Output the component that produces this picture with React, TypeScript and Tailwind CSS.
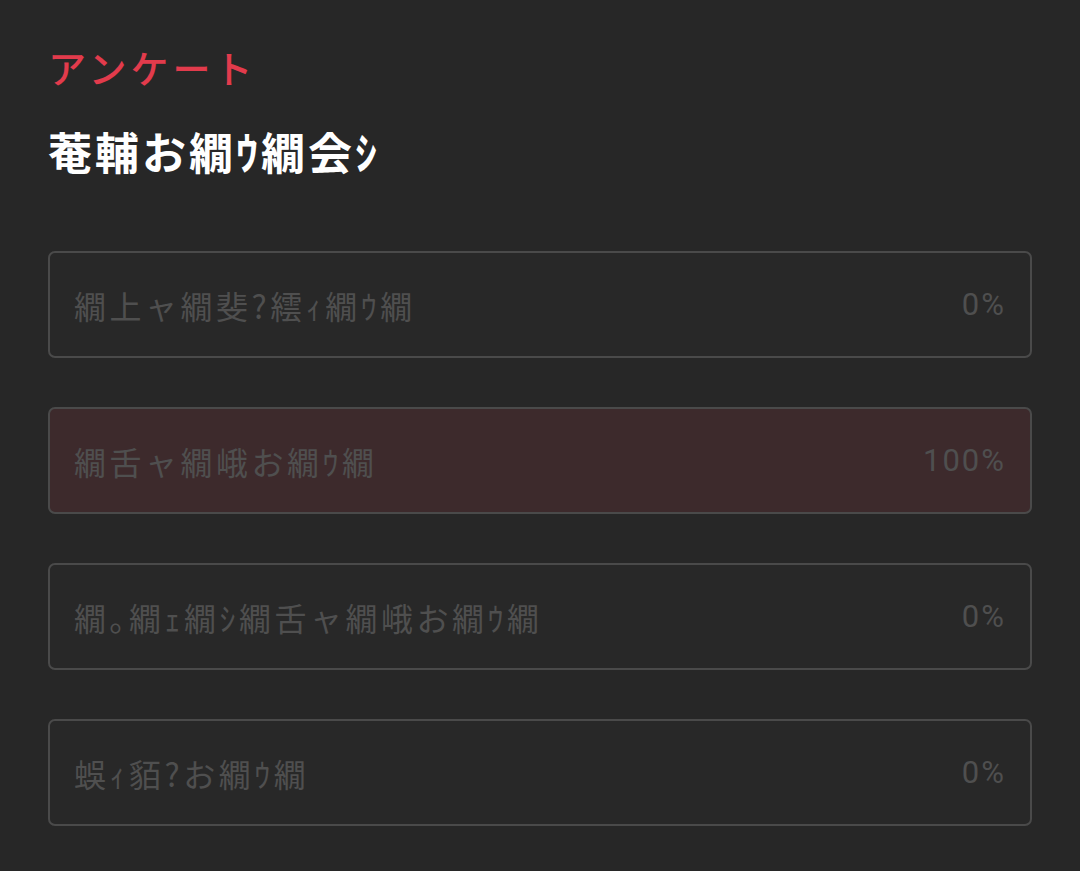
const options = [
  { label: "繝上ャ繝斐?繧ｨ繝ｳ繝", pct: 0 },
  { label: "繝舌ャ繝峨お繝ｳ繝", pct: 100 },
  { label: "繝｡繝ｪ繝ｼ繝舌ャ繝峨お繝ｳ繝", pct: 0 },
  { label: "蜈ｨ貊?お繝ｳ繝", pct: 0 },
]

export default function App() {
  return (
    <div
      className="min-h-[871px] bg-[#272727] px-[48px] pt-[43px]"
      style={{ fontFamily: '"Noto Sans CJK JP", "Noto Sans", sans-serif' }}
    >
      <div className="text-[38px] font-medium leading-[48px] tracking-[4px] text-[#e23b4c]">
        アンケート
      </div>
      <h1 className="mt-[34px] text-[44px] font-bold leading-[52px] tracking-[3px] text-white">
        菴輔お繝ｳ繝会ｼ
      </h1>

      <div className="mt-[74px] flex flex-col gap-[49px]">
        {options.map((o, i) => (
          <div
            key={i}
            className={`flex h-[107px] items-center justify-between rounded-[7px] border-2 border-[#4a4a4a] pl-[24px] pr-[24px] ${
              o.pct === 100 ? "bg-[#3d2a2c]" : "bg-[#282828]"
            }`}
          >
            <span className="text-[32px] leading-none tracking-[3.5px] text-[#4f4f4f]">
              {o.label}
            </span>
            <span
              className="text-[31px] leading-none tracking-[2px] text-[#4f4f4f]"
              style={{ fontFamily: "Roboto, sans-serif" }}
            >
              {o.pct}%
            </span>
          </div>
        ))}
      </div>
    </div>
  )
}
